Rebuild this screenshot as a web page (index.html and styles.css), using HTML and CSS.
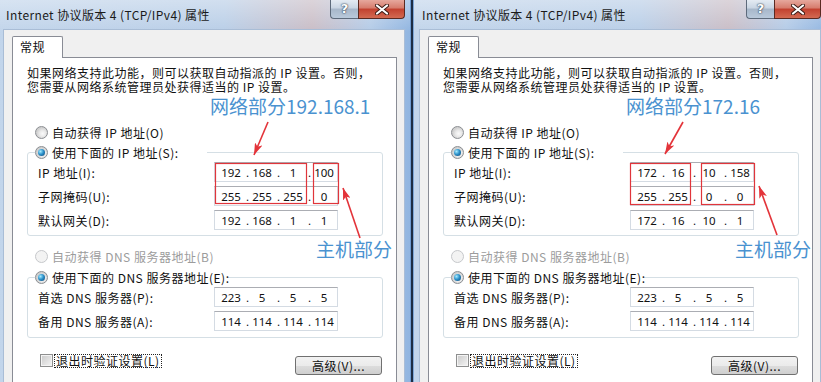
FILE: index.html
```html
<!DOCTYPE html>
<html lang="zh-CN">
<head>
    <meta charset="UTF-8">
    <title>Internet 协议版本 4 (TCP/IPv4) 属性</title>
    <link rel="stylesheet" href="styles.css">
</head>
<body>
    <div class="desktop">
        <!-- window 1: 192.168.1.100 -->
        <div class="window">
            <div class="titlebar">
                <span class="title">Internet 协议版本 4 (TCP/IPv4) 属性</span>
                <div class="caption">
                    <span class="btn-help">?</span>
                    <span class="btn-close">
                        <svg width="14" height="11" viewBox="0 0 14 11"><path d="M2 1.5 L12 9.5 M12 1.5 L2 9.5" stroke="#3a1a14" stroke-width="4" stroke-linecap="round"/><path d="M2 1.5 L12 9.5 M12 1.5 L2 9.5" stroke="#fff" stroke-width="2.2" stroke-linecap="round"/></svg>
                    </span>
                </div>
            </div>
            <div class="client">
                <div class="tab">常规</div>
                <div class="panel">
                    <p class="intro"><span class="intro-line">如果网络支持此功能，则可以获取自动指派的 IP 设置。否则，</span><span class="intro-line">您需要从网络系统管理员处获得适当的 IP 设置。</span></p>

                    <div class="option"><span class="radio"></span>自动获得 IP 地址(O)</div>
                    <fieldset class="group group-ip">
                        <legend class="legend legend-ip"><span class="option"><span class="radio radio-on"></span>使用下面的 IP 地址(S):</span></legend>
                        <div class="row">
                            <span class="row-label">IP 地址(I):</span>
                            <div class="ip"><span class="oct">192</span><span class="dot">.</span><span class="oct">168</span><span class="dot">.</span><span class="oct">1</span><span class="dot">.</span><span class="oct">100</span></div>
                        </div>
                        <div class="row">
                            <span class="row-label">子网掩码(U):</span>
                            <div class="ip"><span class="oct">255</span><span class="dot">.</span><span class="oct">255</span><span class="dot">.</span><span class="oct">255</span><span class="dot">.</span><span class="oct">0</span></div>
                        </div>
                        <div class="row">
                            <span class="row-label">默认网关(D):</span>
                            <div class="ip"><span class="oct">192</span><span class="dot">.</span><span class="oct">168</span><span class="dot">.</span><span class="oct">1</span><span class="dot">.</span><span class="oct">1</span></div>
                        </div>
                    </fieldset>

                    <div class="option option-off"><span class="radio radio-off"></span>自动获得 DNS 服务器地址(B)</div>
                    <fieldset class="group group-dns">
                        <legend class="legend legend-dns"><span class="option"><span class="radio radio-on"></span>使用下面的 DNS 服务器地址(E):</span></legend>
                        <div class="row">
                            <span class="row-label">首选 DNS 服务器(P):</span>
                            <div class="ip"><span class="oct">223</span><span class="dot">.</span><span class="oct">5</span><span class="dot">.</span><span class="oct">5</span><span class="dot">.</span><span class="oct">5</span></div>
                        </div>
                        <div class="row">
                            <span class="row-label">备用 DNS 服务器(A):</span>
                            <div class="ip"><span class="oct">114</span><span class="dot">.</span><span class="oct">114</span><span class="dot">.</span><span class="oct">114</span><span class="dot">.</span><span class="oct">114</span></div>
                        </div>
                    </fieldset>

                    <div class="footer">
                        <div class="check"><span class="checkbox"></span><span class="focus">退出时验证设置(L)</span></div>
                        <button class="btn">高级(V)...</button>
                    </div>
                </div>
            </div>

            <div class="note note-net">网络部分192.168.1</div>
            <div class="note note-host">主机部分</div>
            <svg class="marks" width="416" height="382">
                <defs>
                    <marker id="head-a" viewBox="0 0 12 8" refX="12" refY="4" markerWidth="12" markerHeight="8" markerUnits="userSpaceOnUse" orient="auto"><path d="M0 0 L12 4 L0 8 L3 4 Z" fill="#e3343a"/></marker>
                </defs>
                <rect x="219.5" y="163.5" width="91" height="40" class="box"/>
                <rect x="317.5" y="163.5" width="25" height="40" class="box"/>
                <line x1="272" y1="122" x2="258" y2="155" class="arrow" marker-end="url(#head-a)"/>
                <line x1="364" y1="238" x2="347" y2="188" class="arrow" marker-end="url(#head-a)"/>
            </svg>
        </div>

        <!-- window 2: 172.16.10.158 -->
        <div class="window">
            <div class="titlebar">
                <span class="title">Internet 协议版本 4 (TCP/IPv4) 属性</span>
                <div class="caption">
                    <span class="btn-help">?</span>
                    <span class="btn-close">
                        <svg width="14" height="11" viewBox="0 0 14 11"><path d="M2 1.5 L12 9.5 M12 1.5 L2 9.5" stroke="#3a1a14" stroke-width="4" stroke-linecap="round"/><path d="M2 1.5 L12 9.5 M12 1.5 L2 9.5" stroke="#fff" stroke-width="2.2" stroke-linecap="round"/></svg>
                    </span>
                </div>
            </div>
            <div class="client">
                <div class="tab">常规</div>
                <div class="panel">
                    <p class="intro"><span class="intro-line">如果网络支持此功能，则可以获取自动指派的 IP 设置。否则，</span><span class="intro-line">您需要从网络系统管理员处获得适当的 IP 设置。</span></p>

                    <div class="option"><span class="radio"></span>自动获得 IP 地址(O)</div>
                    <fieldset class="group group-ip">
                        <legend class="legend legend-ip"><span class="option"><span class="radio radio-on"></span>使用下面的 IP 地址(S):</span></legend>
                        <div class="row">
                            <span class="row-label">IP 地址(I):</span>
                            <div class="ip"><span class="oct">172</span><span class="dot">.</span><span class="oct">16</span><span class="dot">.</span><span class="oct">10</span><span class="dot">.</span><span class="oct">158</span></div>
                        </div>
                        <div class="row">
                            <span class="row-label">子网掩码(U):</span>
                            <div class="ip"><span class="oct">255</span><span class="dot">.</span><span class="oct">255</span><span class="dot">.</span><span class="oct">0</span><span class="dot">.</span><span class="oct">0</span></div>
                        </div>
                        <div class="row">
                            <span class="row-label">默认网关(D):</span>
                            <div class="ip"><span class="oct">172</span><span class="dot">.</span><span class="oct">16</span><span class="dot">.</span><span class="oct">10</span><span class="dot">.</span><span class="oct">1</span></div>
                        </div>
                    </fieldset>

                    <div class="option option-off"><span class="radio radio-off"></span>自动获得 DNS 服务器地址(B)</div>
                    <fieldset class="group group-dns">
                        <legend class="legend legend-dns"><span class="option"><span class="radio radio-on"></span>使用下面的 DNS 服务器地址(E):</span></legend>
                        <div class="row">
                            <span class="row-label">首选 DNS 服务器(P):</span>
                            <div class="ip"><span class="oct">223</span><span class="dot">.</span><span class="oct">5</span><span class="dot">.</span><span class="oct">5</span><span class="dot">.</span><span class="oct">5</span></div>
                        </div>
                        <div class="row">
                            <span class="row-label">备用 DNS 服务器(A):</span>
                            <div class="ip"><span class="oct">114</span><span class="dot">.</span><span class="oct">114</span><span class="dot">.</span><span class="oct">114</span><span class="dot">.</span><span class="oct">114</span></div>
                        </div>
                    </fieldset>

                    <div class="footer">
                        <div class="check"><span class="checkbox"></span><span class="focus">退出时验证设置(L)</span></div>
                        <button class="btn">高级(V)...</button>
                    </div>
                </div>
            </div>

            <div class="note note-net">网络部分172.16</div>
            <div class="note note-host note-host-b">主机部分</div>
            <svg class="marks" width="416" height="382">
                <defs>
                    <marker id="head-b" viewBox="0 0 12 8" refX="12" refY="4" markerWidth="12" markerHeight="8" markerUnits="userSpaceOnUse" orient="auto"><path d="M0 0 L12 4 L0 8 L3 4 Z" fill="#e3343a"/></marker>
                </defs>
                <rect x="218.5" y="163.5" width="60" height="41" class="box"/>
                <rect x="289.5" y="163.5" width="53" height="41" class="box"/>
                <line x1="271" y1="122" x2="253" y2="154" class="arrow" marker-end="url(#head-b)"/>
                <line x1="365" y1="235" x2="347" y2="186" class="arrow" marker-end="url(#head-b)"/>
            </svg>
        </div>
    </div>
</body>
</html>
```

FILE: styles.css
```css
* {
    box-sizing: border-box;
}
body {
    margin: 0;
    width: 821px;
    height: 382px;
    overflow: hidden;
    background-color: #6f93bd;
    font-family: "Noto Sans CJK SC", sans-serif;
    font-size: 12px;
    letter-spacing: 0.5px;
    color: #111;
}
.desktop {
    display: flex;
    margin-left: -4px;
}
.window {
    position: relative;
    flex: none;
    width: 416px;
    height: 382px;
    overflow: hidden;
    background:
        linear-gradient(180deg, rgba(255, 255, 255, 0.35), rgba(255, 255, 255, 0) 32px),
        linear-gradient(90deg, #c2d5eb 0%, #b9cee7 55%, #c9bdc6 76%, #b4cbe7 90%, #8fb4e0 100%);
    box-shadow: inset 1px 0 #1d2d44, inset -1px 0 #1d2d44, inset 2px 0 #7ea6d6, inset -2px 0 #6e9bd2;
}
.titlebar {
    display: flex;
    justify-content: space-between;
    align-items: flex-start;
    height: 30px;
    padding: 0 7px 0 10px;
}
.title {
    line-height: 30px;
    font-size: 12px;
    letter-spacing: 0.4px;
    color: #1a1a1a;
}
.caption {
    display: flex;
    letter-spacing: 0;
}
.btn-help {
    width: 28px;
    height: 19px;
    border: 1px solid #5d6a7b;
    border-top: none;
    border-right: none;
    border-radius: 0 0 0 4px;
    background: linear-gradient(180deg, #e4ebf3 0%, #c9d5e3 45%, #a7b7ca 50%, #b9c9db 100%);
    color: #fff;
    font-family: "DejaVu Sans", sans-serif;
    font-weight: bold;
    font-size: 13px;
    line-height: 18px;
    text-align: center;
    text-shadow: 0 0 2px #25354a, 0 0 1px #25354a;
}
.btn-close {
    display: flex;
    justify-content: center;
    align-items: center;
    width: 47px;
    height: 19px;
    border: 1px solid #5a2a22;
    border-top: none;
    border-radius: 0 0 4px 0;
    background: linear-gradient(180deg, #e6a89d 0%, #d67c6c 45%, #c2412f 50%, #d36a52 100%);
}
.client {
    height: 352px;
    margin: 0 8px;
    padding: 6px 7px 0 8px;
    background-color: #f0f0f0;
    box-shadow: 0 0 0 1px #a9bdd6;
}
.tab {
    position: relative;
    z-index: 1;
    width: 51px;
    height: 22px;
    margin-bottom: -1px;
    padding-left: 7px;
    border: 1px solid #898c95;
    border-bottom: none;
    border-radius: 2px 2px 0 0;
    background-color: #fff;
    line-height: 20px;
}
.panel {
    height: 400px;
    padding: 8px 13px 0 14px;
    border: 1px solid #898c95;
    background-color: #fff;
}
.intro {
    margin: 0 0 28px;
    white-space: nowrap;
}
.intro-line {
    display: block;
    height: 14px;
    line-height: 14px;
}
.option {
    display: flex;
    align-items: center;
    height: 20px;
    padding-left: 8px;
    gap: 4px;
    white-space: nowrap;
}
.option-off {
    margin-top: 10px;
    color: #9c9c9c;
}
.radio {
    position: relative;
    flex: none;
    width: 13px;
    height: 13px;
    border: 1px solid #8b8e92;
    border-radius: 50%;
    background: radial-gradient(circle at 60% 60%, #fafafa 0, #eaeaea 3px, #cfcfcf 6px);
}
.radio-on::after {
    content: "";
    position: absolute;
    left: 2px;
    top: 2px;
    width: 7px;
    height: 7px;
    border-radius: 50%;
    background: radial-gradient(circle at 35% 35%, #a6ecff 0, #2e93cc 45%, #0b3f6d 100%);
}
.radio-off {
    border-color: #c6c8cb;
    background: #f3f3f3;
}
.group {
    margin: 0;
    min-width: 0;
    padding: 0 0 5px;
    border: 1px solid #d5dfe5;
    border-radius: 3px;
}
.group-dns {
    margin-top: 1px;
    padding-bottom: 6px;
}
.legend {
    margin-left: 7px;
    padding: 0;
}
.legend .option {
    padding-left: 0;
}
.legend-ip {
    width: 172px;
}
.legend-dns {
    width: 193px;
}
.row {
    display: flex;
    align-items: center;
    height: 20px;
    margin-bottom: 4px;
    padding-left: 10px;
}
.row:last-child {
    margin-bottom: 0;
}
.row-label {
    flex: none;
    width: 176px;
    white-space: nowrap;
}
.ip {
    display: flex;
    align-items: center;
    width: 124px;
    height: 20px;
    padding-left: 5px;
    border: 1px solid #d4dbe3;
    border-top-color: #abadb3;
    background-color: #fff;
    font-family: "Noto Sans", sans-serif;
    font-size: 11.5px;
    letter-spacing: 0;
    color: #111;
}
.oct {
    width: 22px;
    text-align: center;
}
.dot {
    width: 9px;
    padding-right: 2px;
    text-align: right;
}
.footer {
    display: flex;
    justify-content: space-between;
    align-items: flex-start;
    margin-top: 14px;
}
.check {
    display: flex;
    align-items: center;
    gap: 2px;
    margin-top: 2px;
    padding-left: 13px;
}
.checkbox {
    width: 13px;
    height: 13px;
    border: 1px solid #8e8f8f;
    background: linear-gradient(135deg, #c9c9c9, #f5f5f5);
    box-shadow: inset 0 0 0 1px #f4f4f4;
}
.focus {
    padding: 0 1px;
    line-height: 12px;
    outline: 1px dotted #222;
    outline-offset: 0;
}
.btn {
    width: 87px;
    height: 19px;
    margin-top: 4px;
    margin-right: 1px;
    padding: 0;
    border: 1px solid #707070;
    border-radius: 3px;
    background: linear-gradient(180deg, #f2f2f2 0%, #ebebeb 50%, #dddddd 51%, #cfcfcf 100%);
    font-family: "Noto Sans CJK SC", sans-serif;
    font-size: 12px;
    letter-spacing: 0.5px;
    color: #111;
}
.note {
    position: absolute;
    top: 95px;
    left: 214px;
    font-size: 19px;
    line-height: 22px;
    letter-spacing: 0;
    color: #4a92d0;
    white-space: nowrap;
}
.note-host {
    top: 238px;
    left: 320px;
}
.note-host-b {
    left: 323px;
}
.marks {
    position: absolute;
    left: 0;
    top: 0;
    pointer-events: none;
}
.box {
    fill: none;
    stroke: #e0353b;
    stroke-width: 1.2;
}
.arrow {
    stroke: #e3343a;
    stroke-width: 1.6;
}
```
